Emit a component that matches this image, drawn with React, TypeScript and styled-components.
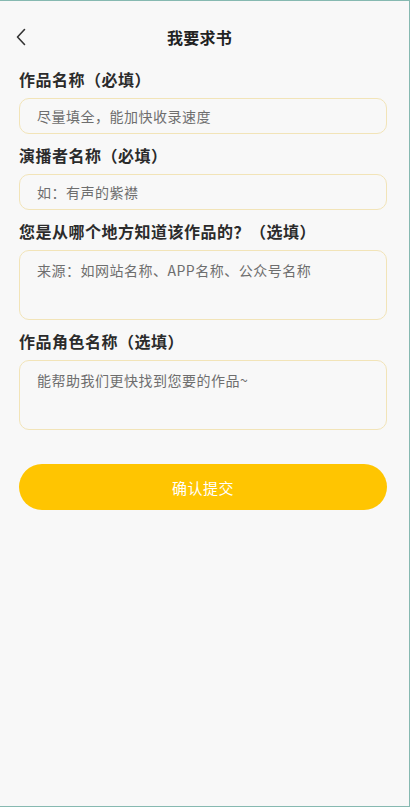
import React from "react";
import styled, { createGlobalStyle } from "styled-components";

const Global = createGlobalStyle`
  html, body { margin: 0; padding: 0; background: #f8f8f8; }
  * { box-sizing: border-box; }
  body { font-family: "Noto Sans CJK SC", "Noto Sans", sans-serif; }
`;

const Page = styled.div`
  width: 410px;
  height: 807px;
  background: #f8f8f8;
  border-top: 1px solid #86b9b1;
  border-right: 1px solid #86b9b1;
  border-bottom: 1px solid #86b9b1;
  display: flex;
  flex-direction: column;
`;

const Header = styled.header`
  margin-top: 13px;
  height: 46px;
  padding-right: 10px;
  position: relative;
  display: flex;
  align-items: center;
  justify-content: center;
`;

const BackButton = styled.button`
  position: absolute;
  left: 11px;
  top: 50%;
  transform: translateY(-50%);
  width: 20px;
  height: 24px;
  padding: 0;
  border: none;
  background: transparent;
  display: flex;
  align-items: center;
  justify-content: center;
`;

const Title = styled.h1`
  margin: 0;
  font-size: 16px;
  font-weight: 700;
  color: #222;
  line-height: 22px;
  letter-spacing: 0.3px;
`;

const Form = styled.form`
  padding: 8px 22px 0 19px;
  display: flex;
  flex-direction: column;
`;

const Field = styled.div`
  display: flex;
  flex-direction: column;
  gap: 8px;
  & + & {
    margin-top: 10px;
  }
`;

const Label = styled.label`
  font-size: 16px;
  font-weight: 700;
  color: #2b2b2b;
  line-height: 22px;
  letter-spacing: 0.5px;
`;

const inputBase = `
  width: 100%;
  border: 1px solid #f2e4b8;
  border-radius: 10px;
  background: #f8f8f8;
  font-family: "Noto Sans CJK SC", "Noto Sans", sans-serif;
  font-size: 14px;
  letter-spacing: 0.5px;
  color: #333;
  outline: none;
  &::placeholder { color: #6e6e6e; opacity: 1; }
`;

const TextInput = styled.input`
  ${inputBase}
  height: 36px;
  padding: 0 17px;
`;

const TextArea = styled.textarea`
  ${inputBase}
  height: 70px;
  padding: 9px 17px;
  resize: none;
  line-height: 20px;
  display: block;
`;

const Submit = styled.button`
  margin-top: 34px;
  height: 46px;
  width: 100%;
  border: none;
  border-radius: 23px;
  background: #ffc501;
  color: #fff;
  font-family: "Noto Sans CJK SC", "Noto Sans", sans-serif;
  font-size: 15px;
  letter-spacing: 0.5px;
`;

export default function App() {
  return (
    <>
      <Global />
      <Page>
        <Header>
          <BackButton aria-label="返回">
            <svg width="12" height="18" viewBox="0 0 12 18">
              <polyline
                points="9.5,1.5 2.5,9 9.5,16.5"
                fill="none"
                stroke="#333"
                strokeWidth="1.6"
                strokeLinecap="round"
                strokeLinejoin="round"
              />
            </svg>
          </BackButton>
          <Title>我要求书</Title>
        </Header>
        <Form onSubmit={(e) => e.preventDefault()}>
          <Field>
            <Label>作品名称（必填）</Label>
            <TextInput placeholder="尽量填全，能加快收录速度" />
          </Field>
          <Field>
            <Label>演播者名称（必填）</Label>
            <TextInput placeholder="如：有声的紫襟" />
          </Field>
          <Field>
            <Label>您是从哪个地方知道该作品的？（选填）</Label>
            <TextArea placeholder="来源：如网站名称、APP名称、公众号名称" />
          </Field>
          <Field>
            <Label>作品角色名称（选填）</Label>
            <TextArea placeholder="能帮助我们更快找到您要的作品~" />
          </Field>
          <Submit type="submit">确认提交</Submit>
        </Form>
      </Page>
    </>
  );
}
